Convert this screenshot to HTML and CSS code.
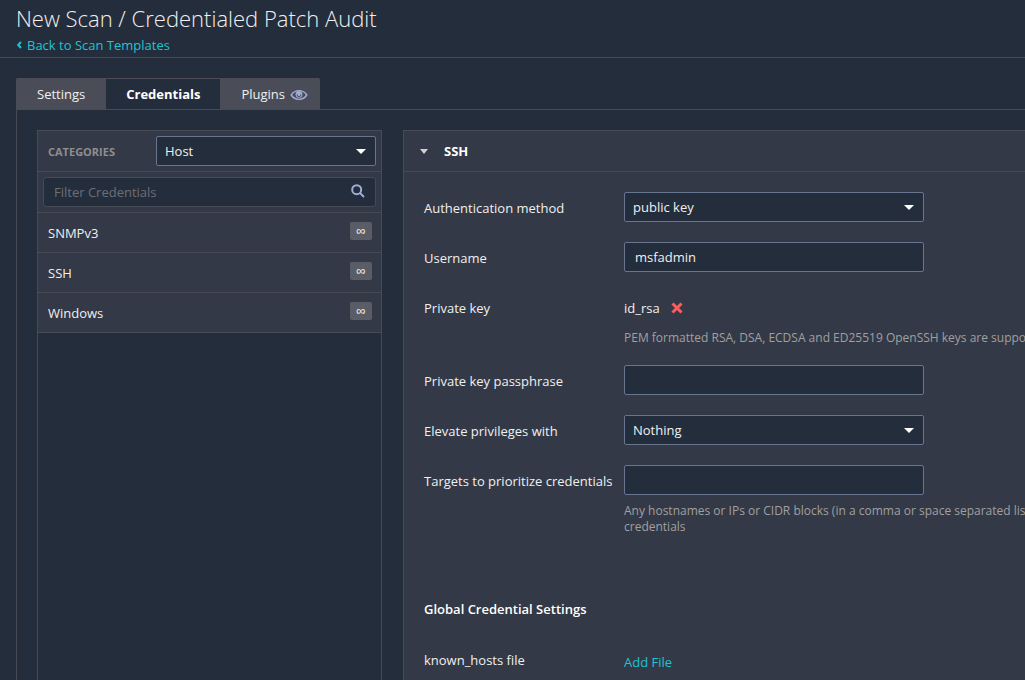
FILE: index.html
```html
<!DOCTYPE html>
<html lang="en">
<head>
<meta charset="utf-8">
<title>New Scan / Credentialed Patch Audit</title>
<link rel="stylesheet" href="styles.css">
</head>
<body>
<header class="page-header">
  <h1 class="page-title">New Scan / Credentialed Patch Audit</h1>
  <a class="back-link" href="#"><svg class="back-icon" viewBox="0 0 6 8" aria-hidden="true"><path d="M5 1 L2.2 4 L5 7"/></svg>Back to Scan Templates</a>
</header>
<main class="content">
  <nav class="tabs">
    <a class="tab" href="#">Settings</a>
    <a class="tab tab-active" href="#">Credentials</a>
    <a class="tab" href="#">Plugins<svg class="eye-icon" viewBox="0 0 18 12" aria-hidden="true"><path class="eye-lid" d="M1.2 6 C5 .2 13 .2 16.8 6 C13 11.8 5 11.8 1.2 6Z"/><circle class="eye-ball" cx="9" cy="5.4" r="3.4"/><path class="eye-glint" d="M7.2 5.4 V6 A1.8 1.8 0 0 0 10.8 6 V5.4"/></svg></a>
  </nav>
  <div class="tab-panel">
    <aside class="categories">
      <div class="categories-head">
        <label class="categories-label" for="category">CATEGORIES</label>
        <div class="select-wrap category-select">
          <select class="field" id="category"><option>Host</option></select>
        </div>
      </div>
      <div class="filter">
        <input class="field filter-input" type="text" placeholder="Filter Credentials" aria-label="Filter Credentials">
        <svg class="search-icon" viewBox="0 0 14 14" aria-hidden="true"><circle cx="5.7" cy="5.7" r="4.5"/><path d="M9 9 L13 13"/></svg>
      </div>
      <ul class="category-list">
        <li class="category">SNMPv3<span class="badge">∞</span></li>
        <li class="category">SSH<span class="badge">∞</span></li>
        <li class="category">Windows<span class="badge">∞</span></li>
      </ul>
    </aside>
    <section class="credential">
      <h2 class="credential-head"><span class="caret"></span>SSH</h2>
      <form class="form">
        <div class="row">
          <label class="label" for="auth">Authentication method</label>
          <div class="control"><div class="select-wrap"><select class="field" id="auth"><option>public key</option></select></div></div>
        </div>
        <div class="row">
          <label class="label" for="user">Username</label>
          <div class="control"><input class="field" id="user" type="text" value="msfadmin"></div>
        </div>
        <div class="row">
          <span class="label">Private key</span>
          <div class="control">
            <div class="file">id_rsa<button class="remove" type="button" aria-label="Remove id_rsa"><svg class="remove-icon" viewBox="0 0 12 12" aria-hidden="true"><path d="M1.5 1.5 L10.5 10.5 M10.5 1.5 L1.5 10.5"/></svg></button></div>
            <p class="help">PEM formatted RSA, DSA, ECDSA and ED25519 OpenSSH keys are supported.</p>
          </div>
        </div>
        <div class="row">
          <label class="label" for="pass">Private key passphrase</label>
          <div class="control"><input class="field" id="pass" type="password"></div>
        </div>
        <div class="row">
          <label class="label" for="elevate">Elevate privileges with</label>
          <div class="control"><div class="select-wrap"><select class="field" id="elevate"><option>Nothing</option></select></div></div>
        </div>
        <div class="row">
          <label class="label" for="targets">Targets to prioritize credentials</label>
          <div class="control">
            <input class="field" id="targets" type="text">
            <p class="help">Any hostnames or IPs or CIDR blocks (in a comma or space separated list)<br>credentials</p>
          </div>
        </div>
        <h3 class="group-title">Global Credential Settings</h3>
        <div class="row">
          <span class="label">known_hosts file</span>
          <div class="control"><a class="add-file" href="#">Add File</a></div>
        </div>
      </form>
    </section>
  </div>
</main>
</body>
</html>
```

FILE: styles.css
```css
* {
  box-sizing: border-box;
}

body {
  margin: 0;
  height: 100vh;
  display: flex;
  flex-direction: column;
  overflow: hidden;
  background: #242d3b;
  color: #f0f0f0;
  font: 13px/20px "Open Sans", sans-serif;
}

h1, h2, h3, p, ul {
  margin: 0;
  padding: 0;
}

a {
  text-decoration: none;
}

.page-header {
  flex: none;
  padding: 4px 16px 2px;
  border-bottom: 1px solid #474b56;
}

.page-title {
  font-size: 22px;
  font-weight: 300;
  line-height: 28px;
}

.back-link {
  display: flex;
  align-items: center;
  gap: 5px;
  padding-top: 3px;
  line-height: 20px;
  color: #1fc4d1;
}

.back-icon {
  width: 6px;
  height: 8px;
  fill: none;
  stroke: currentColor;
  stroke-width: 2;
}

.content {
  flex: 1;
  min-height: 0;
  display: flex;
  flex-direction: column;
  padding: 20px 0 0 16px;
}

.tabs {
  display: flex;
  margin-bottom: -1px;
}

.tab {
  display: flex;
  align-items: center;
  height: 32px;
  padding: 0 20px 2px;
  border: 1px solid #4a4d57;
  border-width: 1px 0 0 1px;
  background: #4a4d57;
  color: #f0f0f0;
}

.tab:first-child {
  padding-right: 21px;
  border-top-left-radius: 2px;
}

.tab:last-child {
  padding-right: 12px;
  border-top-right-radius: 2px;
}

.tab-active {
  padding-left: 19px;
  background: #242d3b;
  border-left-color: #242d3b;
  color: #fff;
  font-weight: 700;
}

.eye-icon {
  width: 18px;
  height: 12px;
  margin: 2px 0 0 5px;
}

.eye-lid {
  fill: none;
  stroke: #a0acd6;
  stroke-width: 1.4;
}

.eye-ball {
  fill: #a0acd6;
}

.eye-glint {
  fill: none;
  stroke: #4a4d57;
}

.tab-panel {
  flex: 1;
  min-height: 0;
  display: flex;
  gap: 21px;
  padding: 20px 0 0 20px;
  border: 1px solid #474b56;
  border-width: 1px 0 0 1px;
}

.categories {
  flex: none;
  width: 345px;
  border: 1px solid #474b56;
  border-bottom: 0;
}

.categories-head,
.filter,
.category {
  display: flex;
  align-items: center;
  border-bottom: 1px solid #474b56;
  background: #333946;
}

.categories-head {
  padding: 5px 5px 5px 10px;
}

.categories-label {
  flex: 1;
  padding-top: 2px;
  color: #8f8f8f;
  font-size: 11px;
  font-weight: 700;
}

.field {
  display: block;
  width: 100%;
  height: 30px;
  padding: 0 10px;
  border: 1px solid #67758f;
  border-radius: 2px;
  outline: 0;
  background: #242d3b;
  color: #f0f0f0;
  font: inherit;
  appearance: none;
}

select.field {
  padding: 0 8px;
}

.select-wrap {
  position: relative;
}

.select-wrap::after {
  content: "";
  position: absolute;
  top: 13px;
  right: 10px;
  border: 5px solid transparent;
  border-top-color: #fff;
  border-bottom: 0;
  pointer-events: none;
}

.category-select {
  width: 220px;
}

.filter {
  position: relative;
  padding: 5px;
}

.filter-input {
  border-color: #474b56;
  border-radius: 3px;
}

.filter-input::placeholder {
  color: #6b7078;
  opacity: 1;
}

.search-icon {
  position: absolute;
  top: 12px;
  right: 16px;
  width: 14px;
  height: 14px;
  fill: none;
  stroke: #a0acd6;
  stroke-width: 2;
}

.category-list {
  list-style: none;
}

.category {
  justify-content: space-between;
  height: 40px;
  padding: 0 9px 0 10px;
}

.badge {
  width: 22px;
  height: 18px;
  margin-bottom: 4px;
  border-radius: 2px;
  background: #5b5d66;
  font-family: "Liberation Sans", sans-serif;
  font-size: 13px;
  line-height: 18px;
  text-align: center;
}

.credential {
  flex: 1;
  min-width: 0;
  overflow: hidden;
  border: 1px solid #474b56;
  border-width: 1px 0 0 1px;
  background: #333946;
}

.credential-head {
  display: flex;
  align-items: center;
  gap: 16px;
  height: 41px;
  padding-left: 16px;
  border-bottom: 1px solid #474b56;
  color: #fff;
  font-size: 13px;
  font-weight: 700;
}

.caret {
  border: 4px solid transparent;
  border-top: 5px solid #d0d0d0;
  border-bottom: 0;
}

.form {
  padding: 20px 0 0 20px;
}

.row {
  display: flex;
  margin-bottom: 20px;
}

.label {
  flex: none;
  width: 200px;
  padding-top: 6px;
}

.control {
  width: 300px;
}

.file {
  display: flex;
  align-items: center;
  gap: 11px;
  height: 30px;
  padding-top: 2px;
}

.remove {
  padding: 0;
  border: 0;
  background: none;
}

.remove-icon {
  display: block;
  width: 12px;
  height: 12px;
  fill: none;
  stroke: #ff5c5c;
  stroke-width: 3;
}

.help {
  margin: 8px 0 -1px;
  color: #a0a0a0;
  font-size: 12px;
  line-height: 16px;
  white-space: nowrap;
}

.group-title {
  margin: 65px 0 25px;
  color: #fff;
  font-size: 13px;
  font-weight: 600;
}

.add-file {
  display: block;
  padding-top: 8px;
  color: #1fc4d1;
}
```
